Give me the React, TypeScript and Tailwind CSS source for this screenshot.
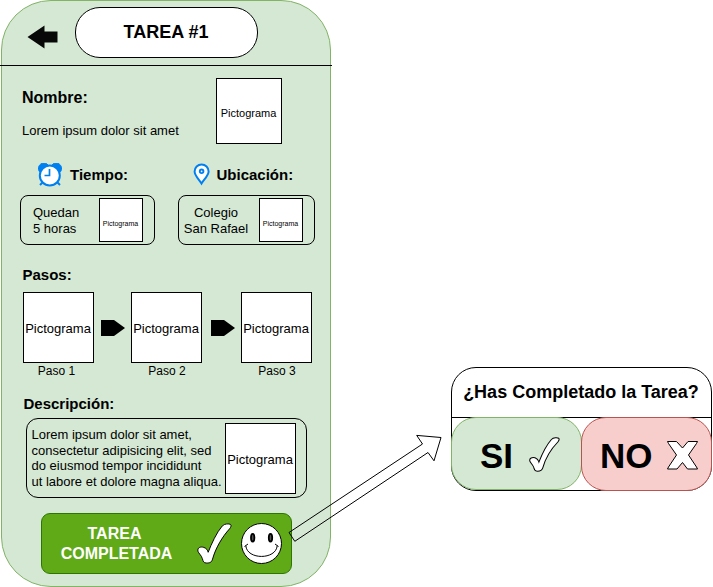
import React from "react";

function Picto({ className }: { className: string }) {
  return (
    <div className={`flex shrink-0 items-center justify-center whitespace-nowrap border border-black bg-white ${className}`}>
      <span>Pictograma</span>
    </div>
  );
}

function Check({ className, stroke }: { className: string; stroke: number }) {
  return (
    <svg className={`shrink-0 ${className}`} viewBox="0 0 36 42" preserveAspectRatio="none">
      <path
        d="M1 29C0 25 4 24 7 25C10 26 11 28 11.500 30C15 21 20 10 26 3C28.500 .5 33 .5 34.500 1.500C35.500 2.500 35 4 33.500 6C26 14 19 26 16 37C15 40.500 13 41 10 41C6.500 41 6.500 39.500 5.500 36.500C4.500 33 1.500 31 1 29Z"
        fill="white" stroke="black" strokeWidth={stroke}
      />
    </svg>
  );
}

function Smile() {
  return (
    <svg className="h-[42px] w-[42px] shrink-0" viewBox="0 0 42 42">
      <circle cx="20.500" cy="20.500" r="20" fill="white" stroke="black" />
      <ellipse cx="11.700" cy="14.700" rx="1.700" ry="3.800" fill="#555" stroke="black" strokeWidth="1.800" />
      <ellipse cx="29.500" cy="14.700" rx="1.700" ry="3.800" fill="#555" stroke="black" strokeWidth="1.800" />
      <path d="M3.500 23.500L7 21M37.500 23.500L34 21M4.800 22.700C6 37 35 37 36.200 22.700" fill="none" stroke="black" />
    </svg>
  );
}

function Clock() {
  return (
    <svg className="h-[24px] w-[24px] shrink-0" viewBox="0 0 24 24">
      <path d="M5 19L2 22M19 19L22 22" stroke="#0080f0" strokeWidth="2" />
      <path d="M1.300 8.500A5.200 5.200 0 0 1 10.500 2.500L3 9ZM22.700 8.500A5.200 5.200 0 0 0 13.500 2.500L21 9Z" fill="#0080f0" stroke="#0080f0" />
      <circle cx="11.800" cy="12.500" r="10" fill="white" stroke="#0080f0" strokeWidth="2" />
      <path d="M11.500 6V12.500H6.500" fill="none" stroke="#0080f0" strokeWidth="1.700" />
    </svg>
  );
}

function Pin() {
  return (
    <svg className="h-[23px] w-[18px] shrink-0" viewBox="0 0 18 23">
      <path d="M8.500 20.500C6 16.500 1.600 12.500 1.600 8.500A7 7 0 0 1 15.600 8.500C15.600 12.500 11 16.500 8.500 20.500Z" fill="white" stroke="#0080f0" strokeWidth="2" />
      <circle cx="8.600" cy="8.300" r="1.800" fill="white" stroke="#0080f0" strokeWidth="1.900" />
    </svg>
  );
}

function Step({ n, label }: { n: number; label: string }) {
  return (
    <div className="flex w-[71px] shrink-0 flex-col">
      <Picto className="h-[71px] w-[71px] pt-[2px] pr-[1px] text-[13px] leading-[16px]" />
      <div className={`text-center text-[12px] leading-[16px] ${label}`}>Paso {n}</div>
    </div>
  );
}

function StepArrow({ className }: { className: string }) {
  return (
    <svg className={`mt-[28px] h-[16px] w-[24px] shrink-0 ${className}`} viewBox="0 0 24 16">
      <path d="M0 0H13L24 8L13 16H0Z" />
    </svg>
  );
}

function Phone() {
  return (
    <div className="ml-[1px] flex h-[587px] w-[330px] shrink-0 flex-col rounded-[50px] border border-[#82b366] bg-[#d5e8d4]">
      <div className="flex h-[64px] shrink-0 items-start pl-[25px]">
        <svg className="mt-[24px] h-[24px] w-[31px]" viewBox="0 0 31 24">
          <path d="M.5 12L17.500 .5V6.500H30.500V17.500H17.500V23.500Z" fill="#080808" />
        </svg>
        <div className="ml-[17px] mt-[6px] flex h-[51px] w-[183px] items-center justify-center rounded-[25px] border border-black bg-white pr-[1px] pb-[2px] text-[18px] leading-[20px] font-bold">
          TAREA #1
        </div>
      </div>
      <div className="-mx-[2px] h-px shrink-0 bg-black" />

      <div className="mt-[12px] flex h-[66px] shrink-0 pl-[20px]">
        <div className="w-[194px] pt-[10px]">
          <div className="text-[16px] leading-[20px] font-bold">Nombre:</div>
          <div className="mt-[15px] text-[13px] leading-[16px]">Lorem ipsum dolor sit amet</div>
        </div>
        <Picto className="h-[66px] w-[66px] pt-[3px] pr-[1px] text-[11px] leading-[14px]" />
      </div>

      <div className="mt-[19px] flex h-[24px] shrink-0 pl-[36px] text-[15px] leading-[20px] font-bold">
        <div className="flex w-[155px]">
          <Clock />
          <span className="ml-[8px] pt-[2px]">Tiempo:</span>
        </div>
        <Pin />
        <span className="ml-[5.500px] pt-[2px]">Ubicación:</span>
      </div>

      <div className="mt-[8px] flex h-[50px] shrink-0 pl-[18px] text-[13px] leading-[16px]">
        <div className="flex w-[135px] rounded-[8px] border border-black pl-[12px]">
          <div className="w-[66px] pt-[9px] whitespace-nowrap">Quedan<br />5 horas</div>
          <Picto className="mt-[2px] h-[44px] w-[44px] pt-[7px] pr-[1px] text-[7px] leading-[8px]" />
        </div>
        <div className="ml-[23px] flex w-[137px] rounded-[8px] border border-black pl-[4px]">
          <div className="w-[66px] pt-[9px] text-center whitespace-nowrap">Colegio<br />San Rafael</div>
          <Picto className="ml-[10px] mt-[2px] h-[44px] w-[44px] pt-[7px] pr-[1px] text-[7px] leading-[8px]" />
        </div>
      </div>

      <div className="mt-[20px] shrink-0 pl-[20.500px] text-[15px] leading-[20px] font-bold">Pasos:</div>
      <div className="mt-[7px] flex h-[87px] shrink-0 pl-[21px]">
        <Step n={1} label="pr-[4px]" />
        <StepArrow className="ml-[7px] mr-[6px]" />
        <Step n={2} label="pl-[1px]" />
        <StepArrow className="ml-[9px] mr-[6px]" />
        <Step n={3} label="pl-[1px]" />
      </div>

      <div className="mt-[15px] shrink-0 pl-[21.500px] text-[15px] leading-[20px] font-bold">Descripción:</div>
      <div className="ml-[24px] mt-[4px] flex h-[80px] w-[281px] shrink-0 rounded-[12px] border border-black pl-[4.500px]">
        <div className="w-[193.500px] shrink-0 pt-[8px] text-[13px] leading-[15.600px] whitespace-nowrap">
          Lorem ipsum dolor sit amet,<br />
          consectetur adipisicing elit, sed<br />
          do eiusmod tempor incididunt<br />
          ut labore et dolore magna aliqua.
        </div>
        <Picto className="mt-[3.500px] h-[71px] w-[71px] pt-[3px] pr-[1px] text-[13px] leading-[16px]" />
      </div>

      <div className="ml-[39px] mt-[15px] flex h-[61px] w-[251px] shrink-0 rounded-[9px] border border-[#2d7600] bg-[#60a917]">
        <div className="ml-[18.500px] w-[112px] pt-[10px] text-center text-[16px] leading-[20px] font-bold text-white">
          <div className="pr-[4px]">TAREA</div>
          <div>COMPLETADA</div>
        </div>
        <Check className="ml-[24.500px] mt-[9px] h-[41px] w-[35px]" stroke={1} />
        <div className="ml-[9px] mt-[9px]"><Smile /></div>
      </div>
    </div>
  );
}

function Dialog() {
  return (
    <div className="ml-[120px] mt-[367px] flex h-[124px] w-[261px] shrink-0 flex-col rounded-[25px] border border-black bg-white">
      <div className="flex h-[50px] shrink-0 items-center justify-center border-b border-black pr-[1px] pb-[2px] text-[18px] leading-[20px] font-bold whitespace-nowrap">
        ¿Has Completado la Tarea?
      </div>
      <div className="-mx-px -mt-px flex shrink-0">
        <div className="flex h-[73px] w-[131px] shrink-0 rounded-[25px] border border-[#82b366] bg-[#d5e8d4] pl-[28px]">
          <span className="w-[49px] pt-[18px] text-[35px] leading-[40px] font-bold">SI</span>
          <Check className="mt-[19px] h-[35px] w-[31px]" stroke={1.2} />
        </div>
        <div className="-ml-px flex h-[74px] w-[131px] shrink-0 rounded-[25px] border border-[#b85450] bg-[#f8cecc] pl-[18px]">
          <span className="w-[67px] pt-[18px] text-[35px] leading-[40px] font-bold">NO</span>
          <svg className="mt-[23px] h-[29px] w-[31px] shrink-0" viewBox="0 0 31 29">
            <path d="M.5 .5H9.500L15.500 7L21 .5H30.500L29.500 2.500L21.500 14L29.500 26L30.500 28H20.500L15.500 21.500L10 28H.5L1.500 26L9.500 14L1.500 2.500Z" fill="white" stroke="black" />
          </svg>
        </div>
      </div>
    </div>
  );
}

export default function App() {
  return (
    <div className="relative flex h-[587px] w-[713px] items-start overflow-hidden bg-white font-['Liberation_Sans',Arial,sans-serif] text-black">
      <Phone />
      <Dialog />
      <svg className="absolute left-[280px] top-[425px] h-[125px] w-[170px]" viewBox="280 425 170 125">
        <path d="M289 532.500L422.500 444L416.700 435.400L441 437.500L434 460.800L428 452.500L294.800 541.300Z" fill="none" stroke="black" />
      </svg>
    </div>
  );
}
